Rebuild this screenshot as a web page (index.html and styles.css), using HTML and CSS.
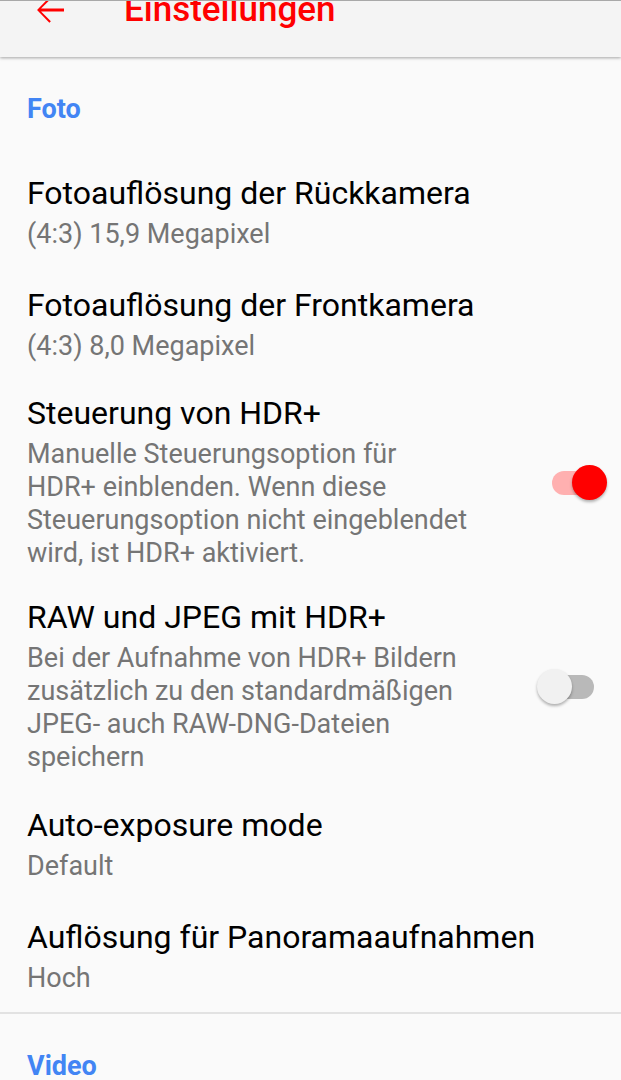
FILE: index.html
```html
<!DOCTYPE html>
<html lang="de">
<head>
    <meta charset="UTF-8">
    <meta name="viewport" content="width=device-width, initial-scale=1.0">
    <title>Einstellungen</title>
    <link rel="stylesheet" href="styles.css">
</head>
<body>

    <header class="toolbar">
        <svg class="toolbar-back" viewBox="0 0 24 24" aria-hidden="true">
            <path d="M20 11.2H6.9l5.6-5.6-.85-.85L4.6 12l7.05 7.25.85-.85-5.6-5.6H20z"/>
        </svg>
        <h1 class="toolbar-title">Einstellungen</h1>
    </header>

    <main class="prefs">
        <section class="pref-group">
            <h2 class="pref-category">Foto</h2>

            <div class="pref">
                <div class="pref-text">
                    <div class="pref-title">Fotoauflösung der Rückkamera</div>
                    <div class="pref-summary">(4:3) 15,9 Megapixel</div>
                </div>
            </div>

            <div class="pref">
                <div class="pref-text">
                    <div class="pref-title">Fotoauflösung der Frontkamera</div>
                    <div class="pref-summary">(4:3) 8,0 Megapixel</div>
                </div>
            </div>

            <div class="pref">
                <div class="pref-text">
                    <div class="pref-title">Steuerung von HDR+</div>
                    <div class="pref-summary">Manuelle Steuerungsoption für<br>HDR+ einblenden. Wenn diese Steuerungsoption nicht eingeblendet wird, ist HDR+ aktiviert.</div>
                </div>
                <div class="switch switch-on">
                    <span class="switch-track"></span>
                    <span class="switch-thumb"></span>
                </div>
            </div>

            <div class="pref">
                <div class="pref-text">
                    <div class="pref-title">RAW und JPEG mit HDR+</div>
                    <div class="pref-summary">Bei der Aufnahme von HDR+ Bildern zusätzlich zu den standardmäßigen JPEG- auch RAW-DNG-Dateien speichern</div>
                </div>
                <div class="switch">
                    <span class="switch-track"></span>
                    <span class="switch-thumb"></span>
                </div>
            </div>

            <div class="pref">
                <div class="pref-text">
                    <div class="pref-title">Auto-exposure mode</div>
                    <div class="pref-summary">Default</div>
                </div>
            </div>

            <div class="pref">
                <div class="pref-text">
                    <div class="pref-title">Auflösung für Panoramaaufnahmen</div>
                    <div class="pref-summary">Hoch</div>
                </div>
            </div>
        </section>

        <section class="pref-group pref-group-divided">
            <h2 class="pref-category">Video</h2>
        </section>
    </main>

</body>
</html>
```

FILE: styles.css
```css
body {
    font-family: Roboto, "Noto Sans", sans-serif;
    background-color: #fafafa;
    margin: 0;
    padding: 0;
    color: #000;
    overflow: hidden;
}

.toolbar {
    position: relative;
    z-index: 1;
    display: flex;
    align-items: flex-start;
    height: 57px;
    box-sizing: border-box;
    border-top: 1px solid #a8a8a8;
    background-color: #f4f4f4;
    box-shadow: 0 1px 3px rgba(0, 0, 0, 0.35);
    overflow: hidden;
}

.toolbar-back {
    flex: none;
    width: 42px;
    height: 42px;
    margin: -12px 0 0 29px;
    fill: #ff0000;
}

.toolbar-title {
    margin: -11px 0 0 53px;
    font-size: 35px;
    line-height: 40px;
    font-weight: 500;
    color: #ff0000;
}

.pref-group-divided {
    border-top: 2px solid #e2e2e2;
}

.pref-category {
    margin: 0;
    padding: 36px 27px 31px;
    font-size: 27px;
    line-height: 32px;
    font-weight: 700;
    color: #4285f4;
}

.pref {
    display: flex;
    align-items: center;
    min-height: 112px;
    box-sizing: border-box;
    padding: 14px 14px 14px 27px;
}

.pref-text {
    flex: 1;
}

.pref-title {
    font-size: 32px;
    line-height: 38px;
    color: #000;
}

.pref-summary {
    margin-top: 6px;
    font-size: 27px;
    line-height: 33px;
    color: #757575;
}

.switch {
    position: relative;
    flex: none;
    width: 70px;
    height: 35px;
    margin-left: 40px;
}

.switch-track {
    position: absolute;
    left: 15px;
    top: 6px;
    width: 42px;
    height: 24px;
    border-radius: 12px;
    background-color: #b9b9b9;
}

.switch-thumb {
    position: absolute;
    left: 0;
    top: 0;
    width: 35px;
    height: 35px;
    border-radius: 50%;
    background-color: #f1f1f1;
    box-shadow: 0 2px 3px rgba(0, 0, 0, 0.3);
}

.switch-on .switch-track {
    background-color: #ffb0b0;
}

.switch-on .switch-thumb {
    left: auto;
    right: 0;
    background-color: #ff0000;
}
```
